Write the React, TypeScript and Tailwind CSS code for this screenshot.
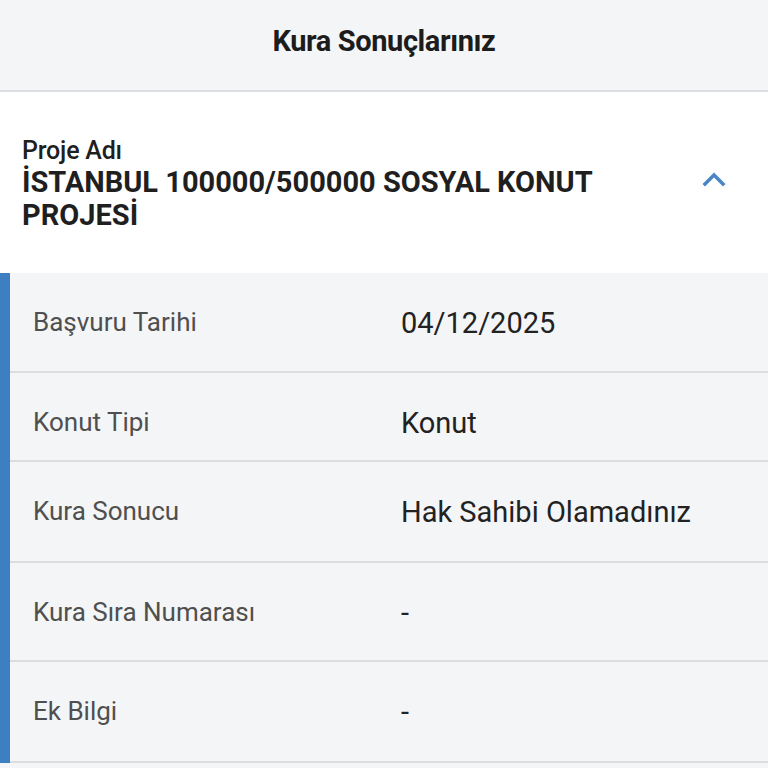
import React from "react";

const rows: { label: string; value: string; h: string }[] = [
  { label: "Başvuru Tarihi", value: "04/12/2025", h: "h-[100px]" },
  { label: "Konut Tipi", value: "Konut", h: "h-[89px]" },
  { label: "Kura Sonucu", value: "Hak Sahibi Olamadınız", h: "h-[101px]" },
  { label: "Kura Sıra Numarası", value: "-", h: "h-[99px]" },
  { label: "Ek Bilgi", value: "-", h: "h-[101px]" },
];

export default function App() {
  return (
    <div
      className="w-[768px] h-[768px] overflow-hidden bg-[#f4f5f7] text-[#1f1f1f]"
      style={{ fontFamily: "Roboto, 'Noto Sans', sans-serif" }}
    >
      {/* Başlık */}
      <header className="h-[92px] flex items-center justify-center border-b-2 border-[#dcdde0] bg-[#f4f5f7]">
        <h1 className="text-[29px] font-bold tracking-[-0.4px] text-[#1c1c1c] -mt-[7px]">Kura Sonuçlarınız</h1>
      </header>

      {/* Proje kartı */}
      <section className="h-[181px] bg-white flex items-center pl-[22px] pr-[42px]">
        <div className="flex-1 mt-[2px]">
          <p className="text-[25px] font-medium leading-[30px] tracking-[-0.2px] text-[#1f1f1f]">Proje Adı</p>
          <p className="text-[29px] font-bold leading-[33px] text-[#1f1f1f] max-w-[610px]">
            İSTANBUL 100000/500000 SOSYAL KONUT PROJESİ
          </p>
        </div>
        <svg width="24" height="16" viewBox="0 0 24 16" className="-mt-[8px]" fill="none">
          <path d="M3 13 L12 4 L21 13" stroke="#4a86c5" strokeWidth="3.5" strokeLinecap="square" />
        </svg>
      </section>

      {/* Detaylar */}
      <div className="flex">
        <div className="w-[10px] bg-[#3d7fc1] shrink-0" />
        <div className="flex-1">
          {rows.map((r) => (
            <div key={r.label} className={`${r.h} flex items-start pt-[33px] border-b-2 border-[#dcdde0]`}>
              <span className="w-[391px] pl-[23px] text-[26px] leading-[30px] text-[#4f4f4f] mt-[1px]">{r.label}</span>
              <span className="text-[29px] leading-[34px] text-[#222]">{r.value}</span>
            </div>
          ))}
        </div>
      </div>
    </div>
  );
}
